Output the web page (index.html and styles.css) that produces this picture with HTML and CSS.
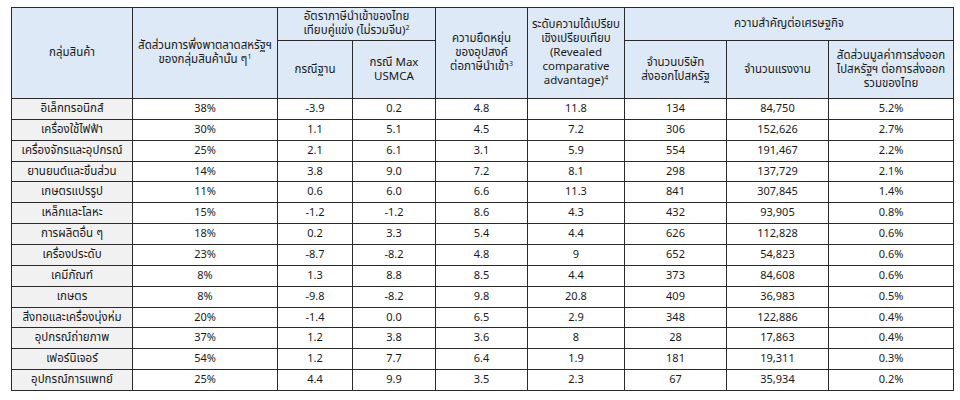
FILE: index.html
```html
<!DOCTYPE html>
<html lang="th">
<head>
<meta charset="utf-8">
<title>ตาราง</title>
<link rel="stylesheet" href="styles.css">
</head>
<body>
<table class="data">
  <colgroup>
    <col class="c1"><col class="c2"><col class="c3"><col class="c4"><col class="c5"><col class="c6"><col class="c7"><col class="c8"><col class="c9">
  </colgroup>
  <thead>
    <tr class="h1">
      <th rowspan="2">กลุ่มสินค้า</th>
      <th rowspan="2">สัดส่วนการพึ่งพาตลาดสหรัฐฯ<br>ของกลุ่มสินค้านั้น ๆ<sup>1</sup></th>
      <th colspan="2">อัตราภาษีนำเข้าของไทย<br>เทียบคู่แข่ง (ไม่รวมจีน)<sup>2</sup></th>
      <th rowspan="2">ความยืดหยุ่น<br>ของอุปสงค์<br>ต่อภาษีนำเข้า<sup>3</sup></th>
      <th rowspan="2">ระดับความได้เปรียบ<br>เชิงเปรียบเทียบ<br>(Revealed<br>comparative<br>advantage)<sup>4</sup></th>
      <th colspan="3">ความสำคัญต่อเศรษฐกิจ</th>
    </tr>
    <tr class="h2">
      <th>กรณีฐาน</th>
      <th>กรณี Max<br>USMCA</th>
      <th>จำนวนบริษัท<br>ส่งออกไปสหรัฐ</th>
      <th>จำนวนแรงงาน</th>
      <th>สัดส่วนมูลค่าการส่งออก<br>ไปสหรัฐฯ ต่อการส่งออก<br>รวมของไทย</th>
    </tr>
  </thead>
  <tbody>
    <tr><td class="name">อิเล็กทรอนิกส์</td><td>38%</td><td>-3.9</td><td>0.2</td><td>4.8</td><td>11.8</td><td>134</td><td>84,750</td><td>5.2%</td></tr>
    <tr><td class="name">เครื่องใช้ไฟฟ้า</td><td>30%</td><td>1.1</td><td>5.1</td><td>4.5</td><td>7.2</td><td>306</td><td>152,626</td><td>2.7%</td></tr>
    <tr><td class="name">เครื่องจักรและอุปกรณ์</td><td>25%</td><td>2.1</td><td>6.1</td><td>3.1</td><td>5.9</td><td>554</td><td>191,467</td><td>2.2%</td></tr>
    <tr><td class="name">ยานยนต์และชิ้นส่วน</td><td>14%</td><td>3.8</td><td>9.0</td><td>7.2</td><td>8.1</td><td>298</td><td>137,729</td><td>2.1%</td></tr>
    <tr><td class="name">เกษตรแปรรูป</td><td>11%</td><td>0.6</td><td>6.0</td><td>6.6</td><td>11.3</td><td>841</td><td>307,845</td><td>1.4%</td></tr>
    <tr><td class="name">เหล็กและโลหะ</td><td>15%</td><td>-1.2</td><td>-1.2</td><td>8.6</td><td>4.3</td><td>432</td><td>93,905</td><td>0.8%</td></tr>
    <tr><td class="name">การผลิตอื่น ๆ</td><td>18%</td><td>0.2</td><td>3.3</td><td>5.4</td><td>4.4</td><td>626</td><td>112,828</td><td>0.6%</td></tr>
    <tr><td class="name">เครื่องประดับ</td><td>23%</td><td>-8.7</td><td>-8.2</td><td>4.8</td><td>9</td><td>652</td><td>54,823</td><td>0.6%</td></tr>
    <tr><td class="name">เคมีภัณฑ์</td><td>8%</td><td>1.3</td><td>8.8</td><td>8.5</td><td>4.4</td><td>373</td><td>84,608</td><td>0.6%</td></tr>
    <tr><td class="name">เกษตร</td><td>8%</td><td>-9.8</td><td>-8.2</td><td>9.8</td><td>20.8</td><td>409</td><td>36,983</td><td>0.5%</td></tr>
    <tr><td class="name">สิ่งทอและเครื่องนุ่งห่ม</td><td>20%</td><td>-1.4</td><td>0.0</td><td>6.5</td><td>2.9</td><td>348</td><td>122,886</td><td>0.4%</td></tr>
    <tr><td class="name">อุปกรณ์ถ่ายภาพ</td><td>37%</td><td>1.2</td><td>3.8</td><td>3.6</td><td>8</td><td>28</td><td>17,863</td><td>0.4%</td></tr>
    <tr><td class="name">เฟอร์นิเจอร์</td><td>54%</td><td>1.2</td><td>7.7</td><td>6.4</td><td>1.9</td><td>181</td><td>19,311</td><td>0.3%</td></tr>
    <tr><td class="name">อุปกรณ์การแพทย์</td><td>25%</td><td>4.4</td><td>9.9</td><td>3.5</td><td>2.3</td><td>67</td><td>35,934</td><td>0.2%</td></tr>
  </tbody>
</table>
</body>
</html>
```
FILE: styles.css
```css
html, body {
  margin: 0;
  padding: 0;
  background: #ffffff;
}
body {
  padding: 7px 0 0 11px;
  font-family: "Noto Sans Thai", "Noto Sans", "DejaVu Sans", sans-serif;
  color: #1a1a1a;
}
.data {
  border-collapse: collapse;
  table-layout: fixed;
  width: 942px;
  border: 1.5px solid #2a2a2a;
}
.c1 { width: 121px; }
.c2 { width: 145px; }
.c3 { width: 75px; }
.c4 { width: 83px; }
.c5 { width: 92px; }
.c6 { width: 97px; }
.c7 { width: 102px; }
.c8 { width: 102px; }
.c9 { width: 125px; }
th, td {
  border: 1px solid #2a2a2a;
  text-align: center;
  vertical-align: middle;
  padding: 0 2px;
  overflow: hidden;
  white-space: nowrap;
}
th {
  background: #dde9f6;
  font-weight: normal;
  font-size: 11.5px;
  line-height: 14px;
}
th sup {
  font-size: 7px;
  vertical-align: top;
  line-height: 0;
  position: relative;
  top: 4px;
}
.h1 th { height: 32px; }
.h2 th { height: 57px; }
td {
  font-size: 11px;
  height: 19.86px;
  line-height: 12px;
  padding-top: 0;
  padding-bottom: 0;
}
td.name {
  font-size: 11.5px;
  background-color: #f1f1f1;
  background-image: radial-gradient(#dcdcdc 0.5px, transparent 0.6px);
  background-size: 2px 2px;
}
```
